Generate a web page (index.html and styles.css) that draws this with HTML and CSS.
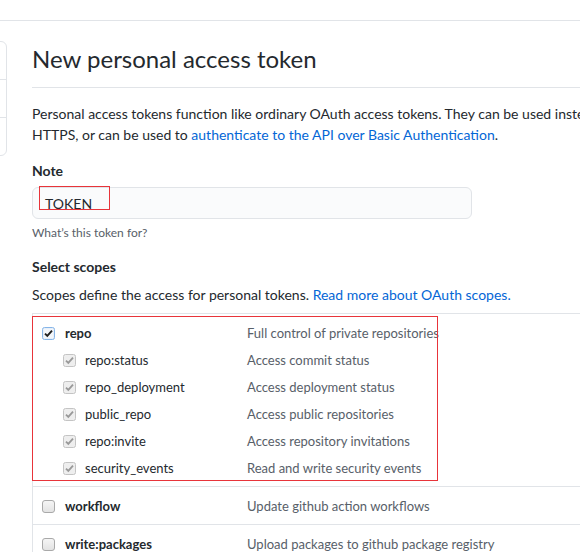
FILE: index.html
```html
<!DOCTYPE html>
<html>
<head>
<meta charset="utf-8">
<link rel="stylesheet" href="styles.css">
</head>
<body>
<div class="topbar"></div>
<div class="layout">
  <nav class="sidebar">
    <div class="side-item"></div>
    <div class="side-item"></div>
    <div class="side-item"></div>
  </nav>
  <main class="main">
    <h1 class="title">New personal access token</h1>
    <p class="intro"><span class="line">Personal access tokens function like ordinary OAuth access tokens. They can be used instead of a password for Git over</span><span class="line">HTTPS, or can be used to <a href="#">authenticate to the API over Basic Authentication</a>.</span></p>
    <label class="field-label">Note</label>
    <div class="input-wrap">
      <div class="input">TOKEN</div>
      <div class="annot annot-input"></div>
    </div>
    <p class="hint">What’s this token for?</p>
    <h3 class="field-label scopes-title">Select scopes</h3>
    <p class="scopes-desc">Scopes define the access for personal tokens. <a href="#">Read more about OAuth scopes.</a></p>
    <div class="scopes">
      <div class="group">
        <div class="row">
          <div class="name"><svg class="cb" width="13" height="13" viewBox="0 0 13 13"><rect x="0.5" y="0.5" width="12" height="12" rx="2" fill="#dde9f7" stroke="#86b5e8"/><rect x="1.5" y="1.5" width="10" height="10" rx="1" fill="#f2f6fb"/><path d="M3 6.6 L5.3 8.9 L10 3.6" stroke="#202020" stroke-width="1.9" fill="none"/></svg><span>repo</span></div>
          <div class="desc">Full control of private repositories</div>
        </div>
        <div class="row sub">
          <div class="name"><svg class="cb" width="13" height="13" viewBox="0 0 13 13"><rect x="0.5" y="0.5" width="12" height="12" rx="2" fill="#eeeeee" stroke="#c4c4c4"/><path d="M3 6.6 L5.3 8.9 L10 3.6" stroke="#999" stroke-width="1.8" fill="none"/></svg><span>repo:status</span></div>
          <div class="desc">Access commit status</div>
        </div>
        <div class="row sub">
          <div class="name"><svg class="cb" width="13" height="13" viewBox="0 0 13 13"><rect x="0.5" y="0.5" width="12" height="12" rx="2" fill="#eeeeee" stroke="#c4c4c4"/><path d="M3 6.6 L5.3 8.9 L10 3.6" stroke="#999" stroke-width="1.8" fill="none"/></svg><span>repo_deployment</span></div>
          <div class="desc">Access deployment status</div>
        </div>
        <div class="row sub">
          <div class="name"><svg class="cb" width="13" height="13" viewBox="0 0 13 13"><rect x="0.5" y="0.5" width="12" height="12" rx="2" fill="#eeeeee" stroke="#c4c4c4"/><path d="M3 6.6 L5.3 8.9 L10 3.6" stroke="#999" stroke-width="1.8" fill="none"/></svg><span>public_repo</span></div>
          <div class="desc">Access public repositories</div>
        </div>
        <div class="row sub">
          <div class="name"><svg class="cb" width="13" height="13" viewBox="0 0 13 13"><rect x="0.5" y="0.5" width="12" height="12" rx="2" fill="#eeeeee" stroke="#c4c4c4"/><path d="M3 6.6 L5.3 8.9 L10 3.6" stroke="#999" stroke-width="1.8" fill="none"/></svg><span>repo:invite</span></div>
          <div class="desc">Access repository invitations</div>
        </div>
        <div class="row sub">
          <div class="name"><svg class="cb" width="13" height="13" viewBox="0 0 13 13"><rect x="0.5" y="0.5" width="12" height="12" rx="2" fill="#eeeeee" stroke="#c4c4c4"/><path d="M3 6.6 L5.3 8.9 L10 3.6" stroke="#999" stroke-width="1.8" fill="none"/></svg><span>security_events</span></div>
          <div class="desc">Read and write security events</div>
        </div>
        <div class="annot annot-scopes"></div>
      </div>
      <div class="group">
        <div class="row">
          <div class="name"><svg class="cb" width="13" height="13" viewBox="0 0 13 13"><defs><linearGradient id="g1" x1="0" y1="0" x2="0" y2="1"><stop offset="0" stop-color="#f6f6f6"/><stop offset="1" stop-color="#e2e2e2"/></linearGradient></defs><rect x="0.5" y="0.5" width="12" height="12" rx="2.5" fill="url(#g1)" stroke="#a9a9a9"/></svg><span>workflow</span></div>
          <div class="desc">Update github action workflows</div>
        </div>
      </div>
      <div class="group">
        <div class="row">
          <div class="name"><svg class="cb" width="13" height="13" viewBox="0 0 13 13"><rect x="0.5" y="0.5" width="12" height="12" rx="2.5" fill="url(#g1)" stroke="#a9a9a9"/></svg><span>write:packages</span></div>
          <div class="desc">Upload packages to github package registry</div>
        </div>
      </div>
    </div>
  </main>
</div>
</body>
</html>
```
FILE: styles.css
```css
* { box-sizing: border-box; }
html, body { margin: 0; padding: 0; }
body {
  width: 580px;
  height: 552px;
  overflow: hidden;
  background: #fff;
  color: #24292e;
  font-family: "Lato", "Noto Sans", sans-serif;
  font-size: 14px;
  line-height: 21px;
}
a { color: #0366d6; text-decoration: none; }
.topbar {
  height: 21px;
  border-bottom: 1px solid #e1e4e8;
}
.layout {
  display: flex;
  align-items: flex-start;
  padding-top: 20px;
}
.sidebar {
  flex: 0 0 200px;
  margin-left: -193px;
  border: 1px solid #e1e4e8;
  border-radius: 6px;
}
.side-item {
  height: 38px;
  border-top: 1px solid #e1e4e8;
}
.side-item:first-child { border-top: 0; height: 37px; }
.main {
  flex: 0 0 auto;
  width: 900px;
  margin-left: 25px;
}
.title {
  margin: 0;
  font-size: 24px;
  font-weight: 400;
  line-height: 36px;
  padding-bottom: 10px;
  border-bottom: 1px solid #e1e4e8;
  width: 560px;
}
.intro {
  margin: 15px 0 0;
}
.line { display: block; white-space: nowrap; }
.field-label {
  display: block;
  margin: 15px 0 0;
  font-weight: 700;
  font-size: 14px;
  line-height: 21px;
}
.input-wrap {
  position: relative;
  margin-top: 6px;
  width: 440px;
}
.input {
  height: 32px;
  padding: 1px 12px 0;
  line-height: 30px;
  background: #fafbfc;
  border: 1px solid #e1e4e8;
  border-radius: 6px;
  color: #24292e;
  font-size: 14px;
}
.annot {
  position: absolute;
  border: 1px solid #e8343a;
  pointer-events: none;
}
.annot-input {
  left: 7px;
  top: -1px;
  width: 71px;
  height: 24px;
}
.hint {
  margin: 5px 0 0;
  font-size: 12px;
  line-height: 18px;
  color: #586069;
}
.scopes-title { margin-top: 14px; }
.scopes-desc { margin: 7px 0 0; }
.scopes {
  margin-top: 8px;
  border-top: 1px solid #e1e4e8;
  border-left: 1px solid #e1e4e8;
  font-size: 13px;
}
.group {
  position: relative;
  padding: 6px 0 4px;
  border-bottom: 1px solid #e1e4e8;
}
.row {
  display: flex;
  height: 27px;
  align-items: center;
}
.name {
  width: 214px;
  flex: 0 0 214px;
  display: flex;
  align-items: center;
  padding-left: 9px;
  font-weight: 700;
  color: #24292e;
}
.row.sub .name { padding-left: 30px; font-weight: 400; }
.cb { flex: 0 0 13px; margin-right: 10px; }
.row.sub .cb { margin-right: 9px; }
.desc { color: #586069; white-space: nowrap; }
.annot-scopes {
  left: -1px;
  top: 2px;
  width: 406px;
  height: 165px;
}
```
